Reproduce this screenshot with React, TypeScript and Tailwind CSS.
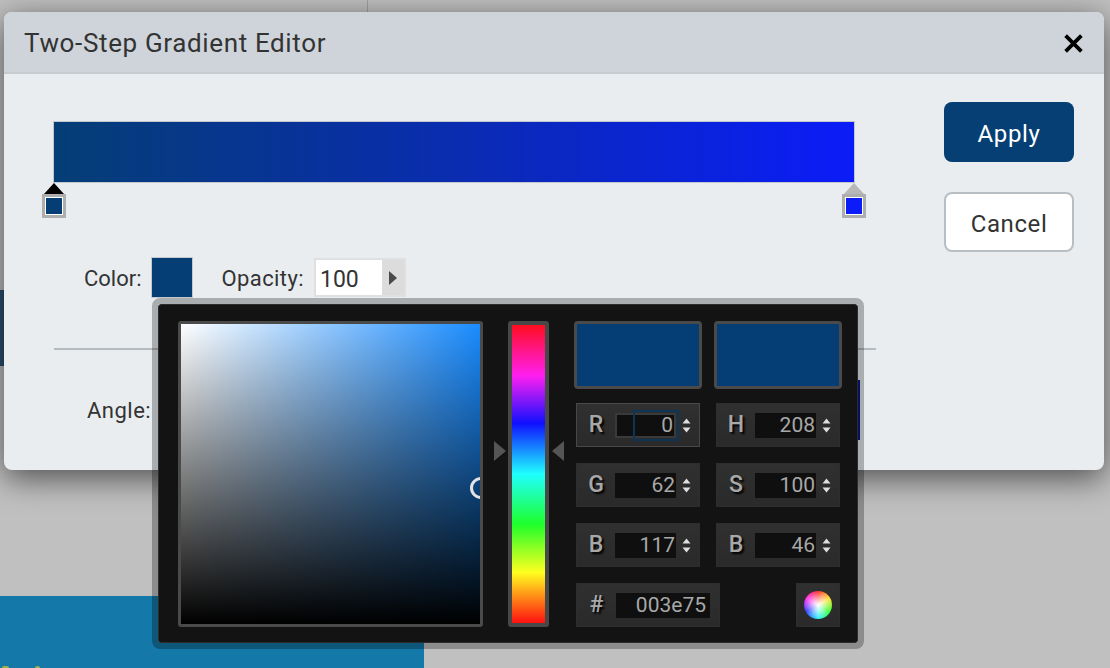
import React from 'react';

const Spinner: React.FC = () => (
  <svg width="9" height="15" viewBox="0 0 9 15" className="ml-[6px] shrink-0">
    <path d="M4.5 0.5 L8.5 5.5 H0.5 Z M4.5 14.5 L8.5 9.5 H0.5 Z" fill="#dedede" />
  </svg>
);

const Field: React.FC<{ label: string; value: string; focused?: boolean }> = ({ label, value, focused }) => (
  <div
    className={`relative flex items-center w-[124px] h-[44px] border bg-gradient-to-b from-[#303030] to-[#2a2a2a] ${
      focused ? 'border-[#484848]' : 'border-[#2e2e2e]'
    }`}
  >
    <span className="w-[38px] text-center text-[23px] font-medium text-[#a8a8a8] [text-shadow:2px_2px_2px_#000]">{label}</span>
    <div
      className={`flex items-center justify-end w-[61px] h-[25px] pr-[1px] pt-[2px] bg-[#0f0f0f] text-[21px] text-[#a8a8a8] ${
        focused ? 'border-2 border-[#3a3a3a]' : ''
      }`}
    >
      {value}
    </div>
    <Spinner />
    {focused && <div className="absolute left-[56px] top-[6px] w-[46px] h-[31px] border-2 border-[#0d3558]" />}
  </div>
);

const StopMarker: React.FC<{ color: string; tip: string }> = ({ color, tip }) => (
  <div className="flex flex-col items-center w-[24px]">
    <svg width="20" height="11" viewBox="0 0 20 11" className="block">
      <path d="M10 0 L20 11 H0 Z" fill={tip} />
    </svg>
    <div className="w-[24px] h-[24px] border-[3px] border-[#aeaeae] bg-white p-[1px]">
      <div className="w-full h-full" style={{ backgroundColor: color }} />
    </div>
  </div>
);

const ColorPicker: React.FC = () => (
  <div className="absolute left-[148px] top-[286px] w-[712px] h-[351px] rounded-[8px] border-[6px] border-black/[0.27] bg-clip-padding">
    <div className="flex w-full h-full pl-[19px] pt-[16px] bg-[#131313] border border-[#2c2c2c] rounded-[3px]">
      <div className="w-[305px] h-[306px] rounded-[3px] border-[3px] border-[#4a4a4a] relative bg-[linear-gradient(to_top,#000,transparent),linear-gradient(to_right,#fff,#1a8cff)]">
        <div className="absolute right-0 top-[153px] w-[10px] h-[22px] overflow-hidden">
          <div className="w-[22px] h-[22px] rounded-full border-[3px] border-[#e4e4e4]" />
        </div>
      </div>
      <div className="relative ml-[25px] w-[41px] h-[306px] rounded-[3px] border-[4px] border-[#484848] bg-[linear-gradient(to_bottom,#ff0d1f,#ff1ff0_17%,#1010ff_33%,#1fffff_50%,#1fff2a_67%,#ffff1f_83%,#ff1010)]">
        <svg width="70" height="20" viewBox="0 0 70 20" className="absolute left-[-18px] top-[116px]">
          <path d="M0 0 L12 10 L0 20 Z M70 0 L58 10 L70 20 Z" fill="#555" />
        </svg>
      </div>
      <div className="ml-[25px] flex flex-col">
        <div className="flex gap-[12px]">
          <div className="w-[128px] h-[68px] rounded-[4px] border-[3px] border-[#4a4a4a] bg-[#043e75]" />
          <div className="w-[128px] h-[68px] rounded-[4px] border-[3px] border-[#4a4a4a] bg-[#043e75]" />
        </div>
        <div className="ml-[2px] mt-[14px] grid grid-cols-[124px_124px] gap-x-[16px] gap-y-[16px]">
          <Field label="R" value="0" focused />
          <Field label="H" value="208" />
          <Field label="G" value="62" />
          <Field label="S" value="100" />
          <Field label="B" value="117" />
          <Field label="B" value="46" />
        </div>
        <div className="ml-[2px] mt-[16px] flex justify-between w-[264px]">
          <div className="flex items-center w-[144px] h-[44px] border border-[#2e2e2e] bg-gradient-to-b from-[#303030] to-[#2a2a2a]">
            <span className="w-[39px] text-center text-[23px] font-medium text-[#a8a8a8] [text-shadow:2px_2px_2px_#000]">#</span>
            <div className="flex items-center justify-end w-[94px] h-[25px] pr-[4px] pt-[2px] bg-[#0f0f0f] text-[21px] text-[#a8a8a8]">003e75</div>
          </div>
          <div className="flex items-center justify-center w-[44px] h-[44px] border border-[#2e2e2e] bg-gradient-to-b from-[#303030] to-[#2a2a2a]">
            <div className="w-[28px] h-[28px] rounded-full blur-[0.4px] bg-[radial-gradient(circle,#ffffff_0%,#ffffffaa_25%,#ffffff00_70%),conic-gradient(#ff3030,#ffe030,#30ff30,#30f0ff,#3040ff,#ff30f0,#ff3030)]" />
          </div>
        </div>
      </div>
    </div>
  </div>
);

const App: React.FC = () => {
  return (
    <div className="relative w-[1110px] h-[668px] overflow-hidden bg-[#c0c0c0] font-['Roboto',sans-serif]">
      {/* page behind the modal */}
      <div className="w-[368px] h-[12px] border-r border-[#a0a0a0]" />
      <div className="mt-[278px] w-[4px] h-[76px] bg-[#2e4f70]" />
      <div className="mt-[230px] w-[424px] h-[72px] bg-[#1478a8] flex items-start gap-[26px] pt-[70px] pl-[2px]">
        <div className="w-[7px] h-[4px] rounded-full bg-[#9fb04a]" />
        <div className="w-[5px] h-[4px] rounded-full bg-[#9fb04a]" />
      </div>

      <div className="absolute left-[4px] top-[12px] w-[1100px] h-[458px] rounded-[8px] bg-[#e9edf0] shadow-[0_8px_32px_rgba(0,0,0,0.6)]">
        <div className="flex items-center justify-between h-[62px] pt-[2px] pl-[20px] pr-[20px] rounded-t-[8px] bg-[#cfd4db] border-b-2 border-[#c6cbd0]">
          <span className="text-[26px] tracking-[0.64px] text-[#333]">Two-Step Gradient Editor</span>
          <svg width="21" height="21" viewBox="0 0 20 20">
            <path d="M2.5 2.5 L17.5 17.5 M17.5 2.5 L2.5 17.5" stroke="#000" strokeWidth="3.6" />
          </svg>
        </div>

        <div className="flex pl-[49px]">
          <div className="w-[823px] pt-[47px]">
            <div className="w-[802px] h-[62px] border border-[#c4c8cc] bg-[linear-gradient(to_right,#043e75,#0a2cb0_50%,#0b1cf8)]" />
            <div className="flex justify-between w-[824px] -ml-[11px]">
              <StopMarker color="#043e75" tip="#000" />
              <StopMarker color="#0b1cf8" tip="#b8b8b8" />
            </div>
            <div className="mt-[39px] pl-[31px] h-[41px] flex items-center text-[22px] text-[#333]">
              <span className="pt-[2px]">Color:</span>
              <div className="ml-[9px] w-[42px] h-[41px] bg-[#043e75] border border-[#c4c8cc]" />
              <span className="ml-[29px] pt-[2px] tracking-[0.4px]">Opacity:</span>
              <div className="ml-[10px] flex w-[92px] h-[39px] bg-[#dcdcdc] border-2 border-[#e0e0e0]">
                <div className="w-[66px] bg-white pl-[4px] pt-[1px] text-[23px] leading-[38px]">100</div>
                <div className="flex-1 flex items-center justify-center">
                  <svg width="8" height="14" viewBox="0 0 8 14">
                    <path d="M0 0 L8 7 L0 14 Z" fill="#4a4a4a" />
                  </svg>
                </div>
              </div>
            </div>
            <div className="mt-[50px] ml-[1px] h-[2px] bg-[#b5bcc0]" />
            <div className="mt-[30px] pl-[34px] pr-[16px] h-[60px] flex items-center justify-between text-[22px] text-[#333]">
              <span className="tracking-[0.5px]">Angle:</span>
              <div className="w-[60px] h-[60px] bg-[#03188a]" />
            </div>
          </div>
          <div className="ml-[68px] pt-[28px] flex flex-col gap-[30px]">
            <button className="w-[130px] h-[60px] pt-[3px] rounded-[8px] bg-[#053f73] text-white text-[24px] tracking-[0.6px]">Apply</button>
            <button className="w-[130px] h-[60px] pt-[3px] rounded-[8px] bg-white border-2 border-[#b8bfc4] text-[#333] text-[24px] tracking-[0.6px]">Cancel</button>
          </div>
        </div>

        <ColorPicker />
      </div>
    </div>
  );
};

export default App;
